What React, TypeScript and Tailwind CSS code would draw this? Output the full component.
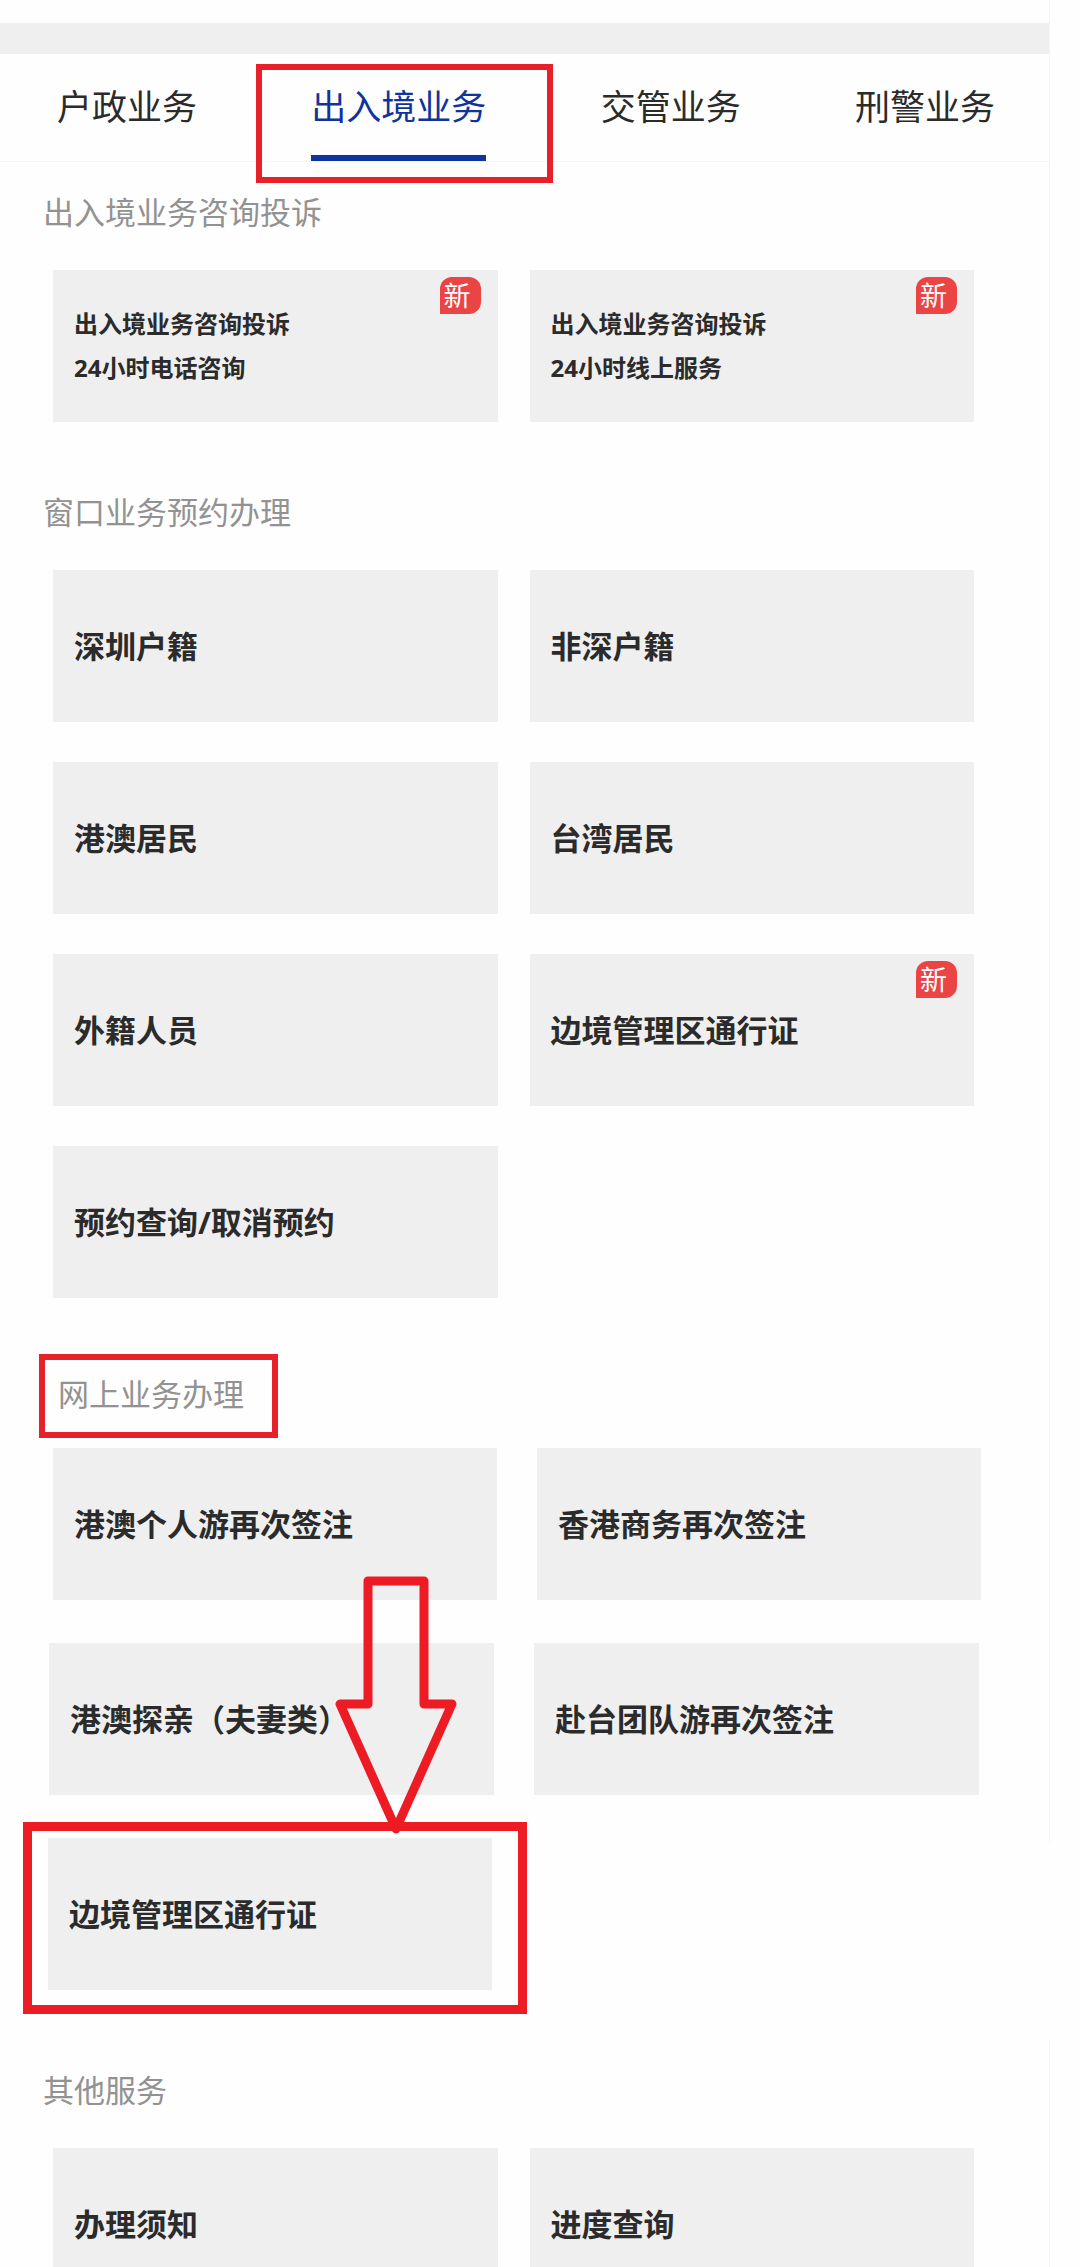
import { useState } from "react";
import clsx from "clsx";

interface Service {
  lines: string[];
  isNew?: boolean;
}

const TABS = ["户政业务", "出入境业务", "交管业务", "刑警业务"];

const CONSULT: Service[] = [
  { lines: ["出入境业务咨询投诉", "24小时电话咨询"], isNew: true },
  { lines: ["出入境业务咨询投诉", "24小时线上服务"], isNew: true },
];

const WINDOW: Service[] = [
  { lines: ["深圳户籍"] },
  { lines: ["非深户籍"] },
  { lines: ["港澳居民"] },
  { lines: ["台湾居民"] },
  { lines: ["外籍人员"] },
  { lines: ["边境管理区通行证"], isNew: true },
  { lines: ["预约查询/取消预约"] },
];

const OTHER: Service[] = [{ lines: ["办理须知"] }, { lines: ["进度查询"] }];

function Card({ lines, isNew }: Service) {
  return (
    <a
      href="#"
      className={clsx(
        "relative flex h-[152px] flex-col justify-center bg-[#efefef] pl-[21px] font-bold text-[#2b2b2b]",
        lines.length > 1 ? "text-[24px] leading-[44px]" : "text-[31px] leading-[44px]"
      )}
    >
      {lines.map((line) => (
        <span key={line}>{line}</span>
      ))}
      {isNew && (
        <span className="absolute top-[7px] right-[17px] h-[37px] w-[41px] rounded-xl rounded-bl-none bg-[#ea4444] pl-1 text-[27px] leading-[37px] font-normal text-white">
          新
        </span>
      )}
    </a>
  );
}

function Section({ title, items }: { title: string; items: Service[] }) {
  return (
    <section className="border-r border-[#f5f5f5] pb-10">
      <h2 className="pb-2 pl-[43px] text-[31px] leading-[100px] text-[#929292]">{title}</h2>
      <div className="grid grid-cols-2 gap-x-8 gap-y-10 pr-[75px] pl-[53px]">
        {items.map((item) => (
          <Card key={item.lines.join()} {...item} />
        ))}
      </div>
    </section>
  );
}

function Arrow() {
  return (
    <svg
      className="pointer-events-none absolute top-[234px] left-[335px] h-[264px] w-[122px]"
      viewBox="0 0 122 264"
      fill="none"
    >
      <path
        d="M33 9H89V132H117L61 257L5 132H33Z"
        stroke="#ed1c24"
        strokeWidth="9"
        strokeLinejoin="round"
      />
    </svg>
  );
}

export default function App() {
  const [active, setActive] = useState(1);

  return (
    <div className="h-screen overflow-hidden bg-[#fefefe] pr-[30px] font-['Noto_Sans','Noto_Sans_CJK_SC',sans-serif]">
      <div className="h-[23px] border-r border-[#f5f5f5]" />
      <div className="h-[31px] border-r border-[#f5f5f5] bg-[#efefef]" />

      {/* Tabs */}
      <ul role="tablist" className="flex justify-between border-r border-b border-[#f5f5f5] pr-[54px] pl-[57px]">
        {TABS.map((tab, i) => (
          <li key={tab} role="presentation" className="relative">
            <button
              type="button"
              role="tab"
              aria-selected={i === active}
              onClick={() => setActive(i)}
              className={clsx(
                "h-[107px] border-y-6 border-transparent text-[35px]",
                i === active ? "border-b-[#10349c] text-[#10349c]" : "text-[#2b2b2b]"
              )}
            >
              {tab}
            </button>
            {i === 1 && (
              <span className="pointer-events-none absolute top-[10px] -right-[67px] -bottom-[22px] -left-[55px] border-6 border-[#e8202a]" />
            )}
          </li>
        ))}
      </ul>

      <Section title="出入境业务咨询投诉" items={CONSULT} />
      <Section title="窗口业务预约办理" items={WINDOW} />

      {/* Online services, with the highlighted entry */}
      <section className="relative pb-[26px]">
        <div className="border-r border-[#f5f5f5] pt-4 pb-12">
          <h2 className="mb-[10px] ml-[39px] w-fit border-6 border-[#e8202a] pr-7 pb-1 pl-[13px] text-[31px] leading-[68px] text-[#929292]">
            网上业务办理
          </h2>
          <div className="flex flex-col gap-[43px]">
            <div className="grid grid-cols-2 gap-10 pr-[68px] pl-[53px]">
              <Card lines={["港澳个人游再次签注"]} />
              <Card lines={["香港商务再次签注"]} />
            </div>
            <div className="grid grid-cols-2 gap-10 pr-[70px] pl-[49px]">
              <Card lines={["港澳探亲（夫妻类）"]} />
              <Card lines={["赴台团队游再次签注"]} />
            </div>
          </div>
        </div>
        <div className="-mt-[21px] grid grid-cols-2 pr-[19px] pl-[23px]">
          <div className="border-9 border-[#ed1c24] pt-[7px] pr-[26px] pb-[15px] pl-4">
            <Card lines={["边境管理区通行证"]} />
          </div>
        </div>
        <Arrow />
      </section>

      <Section title="其他服务" items={OTHER} />
    </div>
  );
}
